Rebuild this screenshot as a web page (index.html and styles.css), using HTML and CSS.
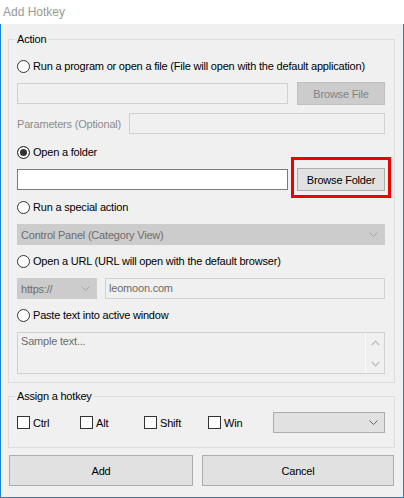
FILE: index.html
```html
<!DOCTYPE html>
<html lang="en">
<head>
  <meta charset="UTF-8">
  <title>Add Hotkey</title>
  <link rel="stylesheet" href="styles.css">
</head>
<body>

  <div class="titlebar">Add Hotkey</div>

  <div class="client">
    <div class="group group-action">
      <span class="group-title">Action</span>

      <label class="option opt-first"><span class="radio"></span>Run a program or open a file (File will open with the default application)</label>
      <div class="row row-browse">
        <div class="textbox disabled path"></div>
        <div class="button disabled">Browse File</div>
      </div>
      <div class="row row-params">
        <span class="label disabled-text">Parameters (Optional)</span>
        <div class="textbox disabled params"></div>
      </div>

      <label class="option opt-folder"><span class="radio checked"></span>Open a folder</label>
      <div class="row row-browse">
        <div class="textbox path"></div>
        <div class="highlight">
          <div class="button">Browse Folder</div>
        </div>
      </div>

      <label class="option"><span class="radio"></span>Run a special action</label>
      <div class="row row-combo">
        <div class="combo disabled full">
          <span class="combo-text">Control Panel (Category View)</span>
          <svg class="arrow" width="9" height="5" viewBox="0 0 9 5"><polyline points="0.5,0.5 4.5,4.5 8.5,0.5" fill="none" stroke="#a6a6a6" stroke-width="1"/></svg>
        </div>
      </div>

      <label class="option"><span class="radio"></span>Open a URL (URL will open with the default browser)</label>
      <div class="row row-combo">
        <div class="combo disabled proto">
          <span class="combo-text">https://</span>
          <svg class="arrow" width="9" height="5" viewBox="0 0 9 5"><polyline points="0.5,0.5 4.5,4.5 8.5,0.5" fill="none" stroke="#a6a6a6" stroke-width="1"/></svg>
        </div>
        <div class="textbox disabled url">leomoon.com</div>
      </div>

      <label class="option"><span class="radio"></span>Paste text into active window</label>
      <div class="textarea disabled">
        <span class="textarea-text">Sample text...</span>
        <div class="scrollbar">
          <svg width="9" height="6" viewBox="0 0 9 6"><polyline points="0.8,5 4.5,1.3 8.2,5" fill="none" stroke="#c2c2c2" stroke-width="1.6"/></svg>
          <svg width="9" height="6" viewBox="0 0 9 6"><polyline points="0.8,1 4.5,4.7 8.2,1" fill="none" stroke="#c2c2c2" stroke-width="1.6"/></svg>
        </div>
      </div>
    </div>

    <div class="group group-hotkey">
      <span class="group-title">Assign a hotkey</span>
      <div class="row row-keys">
        <label class="check ctrl"><span class="box"></span>Ctrl</label>
        <label class="check alt"><span class="box"></span>Alt</label>
        <label class="check shift"><span class="box"></span>Shift</label>
        <label class="check win"><span class="box"></span>Win</label>
        <div class="combo keys">
          <span class="combo-text"></span>
          <svg class="arrow" width="9" height="5" viewBox="0 0 9 5"><polyline points="0.5,0.5 4.5,4.5 8.5,0.5" fill="none" stroke="#606060" stroke-width="1"/></svg>
        </div>
      </div>
    </div>

    <div class="actions">
      <div class="button big add">Add</div>
      <div class="button big cancel">Cancel</div>
    </div>
  </div>

</body>
</html>
```

FILE: styles.css
```css
body {
  margin: 0;
  font-family: "Liberation Sans", Arial, sans-serif;
  font-size: 11px;
  letter-spacing: -0.2px;
  color: #000;
  background: #fff;
  width: 404px;
}
.titlebar {
  height: 24px;
  line-height: 24px;
  padding-left: 3px;
  font-size: 12px;
  letter-spacing: 0;
  color: #999;
  background: #fff;
}
.client {
  height: 474px;
  box-sizing: border-box;
  background: #f0f0f0;
  border: 1px solid #1883d7;
  border-top: none;
  padding: 15px 8px 0 7px;
}
.group {
  position: relative;
  border: 1px solid #dcdcdc;
  padding: 0 9px 8px 8px;
}
.group-title {
  position: absolute;
  top: -7px;
  left: 6px;
  padding: 0 2px;
  line-height: 13px;
  background: #f0f0f0;
}
.option {
  display: flex;
  align-items: center;
  height: 13px;
  line-height: 13px;
  margin-top: 10px;
}
.option.opt-first {
  margin-top: 20px;
}
.option.opt-folder {
  margin-top: 12px;
}
.radio {
  width: 13px;
  height: 13px;
  box-sizing: border-box;
  border: 1px solid #333;
  border-radius: 50%;
  background: #fff;
  margin-right: 3px;
  flex: none;
}
.radio.checked {
  background: #333;
  box-shadow: inset 0 0 0 2px #fff;
}
.row {
  display: flex;
  align-items: center;
}
.row-browse {
  height: 23px;
  margin-top: 9px;
  gap: 9px;
}
.row-params {
  height: 21px;
  margin-top: 8px;
}
.row-combo {
  height: 21px;
  margin-top: 10px;
  gap: 8px;
}
.label {
  flex: 1;
}
.disabled-text {
  color: #8c8c8c;
}
.textbox {
  height: 21px;
  line-height: 19px;
  box-sizing: border-box;
  border: 1px solid #7a7a7a;
  background: #fff;
  padding-left: 3px;
}
.textbox.disabled {
  border-color: #d0d0d0;
  background: #f0f0f0;
  color: #6d6d6d;
}
.path {
  width: 271px;
}
.params {
  width: 256px;
}
.url {
  flex: 1;
}
.button {
  height: 23px;
  width: 88px;
  box-sizing: border-box;
  border: 1px solid #adadad;
  background: #e1e1e1;
  display: flex;
  align-items: center;
  justify-content: center;
}
.button.disabled {
  background: #cccccc;
  border-color: #bfbfbf;
  color: #838383;
}
.highlight {
  position: relative;
}
.highlight::after {
  content: "";
  position: absolute;
  top: -11px;
  bottom: -7px;
  left: -6px;
  right: -6px;
  border: 3px solid #ee0000;
}
.combo {
  height: 21px;
  box-sizing: border-box;
  border: 1px solid #adadad;
  background: #e1e1e1;
  display: flex;
  align-items: center;
  padding: 0 6px 0 3px;
}
.combo.disabled {
  background: #cccccc;
  border-color: #cccccc;
  color: #6d6d6d;
}
.combo-text {
  flex: 1;
}
.full {
  flex: 1;
}
.proto {
  width: 80px;
}
.textarea {
  height: 42px;
  margin-top: 10px;
  box-sizing: border-box;
  border: 1px solid #d0d0d0;
  background: #f0f0f0;
  color: #6d6d6d;
  display: flex;
}
.textarea-text {
  flex: 1;
  padding: 2px 0 0 3px;
  line-height: 13px;
}
.scrollbar {
  width: 18px;
  border-left: 1px solid #fafafa;
  display: flex;
  flex-direction: column;
  align-items: center;
  justify-content: space-between;
  padding: 7px 0 6px;
}
.group-hotkey {
  margin-top: 13px;
  padding-top: 15px;
  padding-bottom: 14px;
}
.row-keys {
  height: 21px;
}
.check {
  display: flex;
  align-items: center;
  height: 13px;
}
.box {
  width: 13px;
  height: 13px;
  box-sizing: border-box;
  border: 1px solid #333;
  background: #fff;
  margin-right: 3px;
}
.ctrl { width: 63px; }
.alt { width: 64px; }
.shift { width: 64px; }
.win { width: 65px; }
.keys {
  width: 112px;
}
.actions {
  display: flex;
  gap: 9px;
  margin-top: 7px;
  margin-left: 1px;
}
.button.big {
  height: 31px;
}
.add {
  width: 184px;
}
.cancel {
  width: 192px;
}
```
